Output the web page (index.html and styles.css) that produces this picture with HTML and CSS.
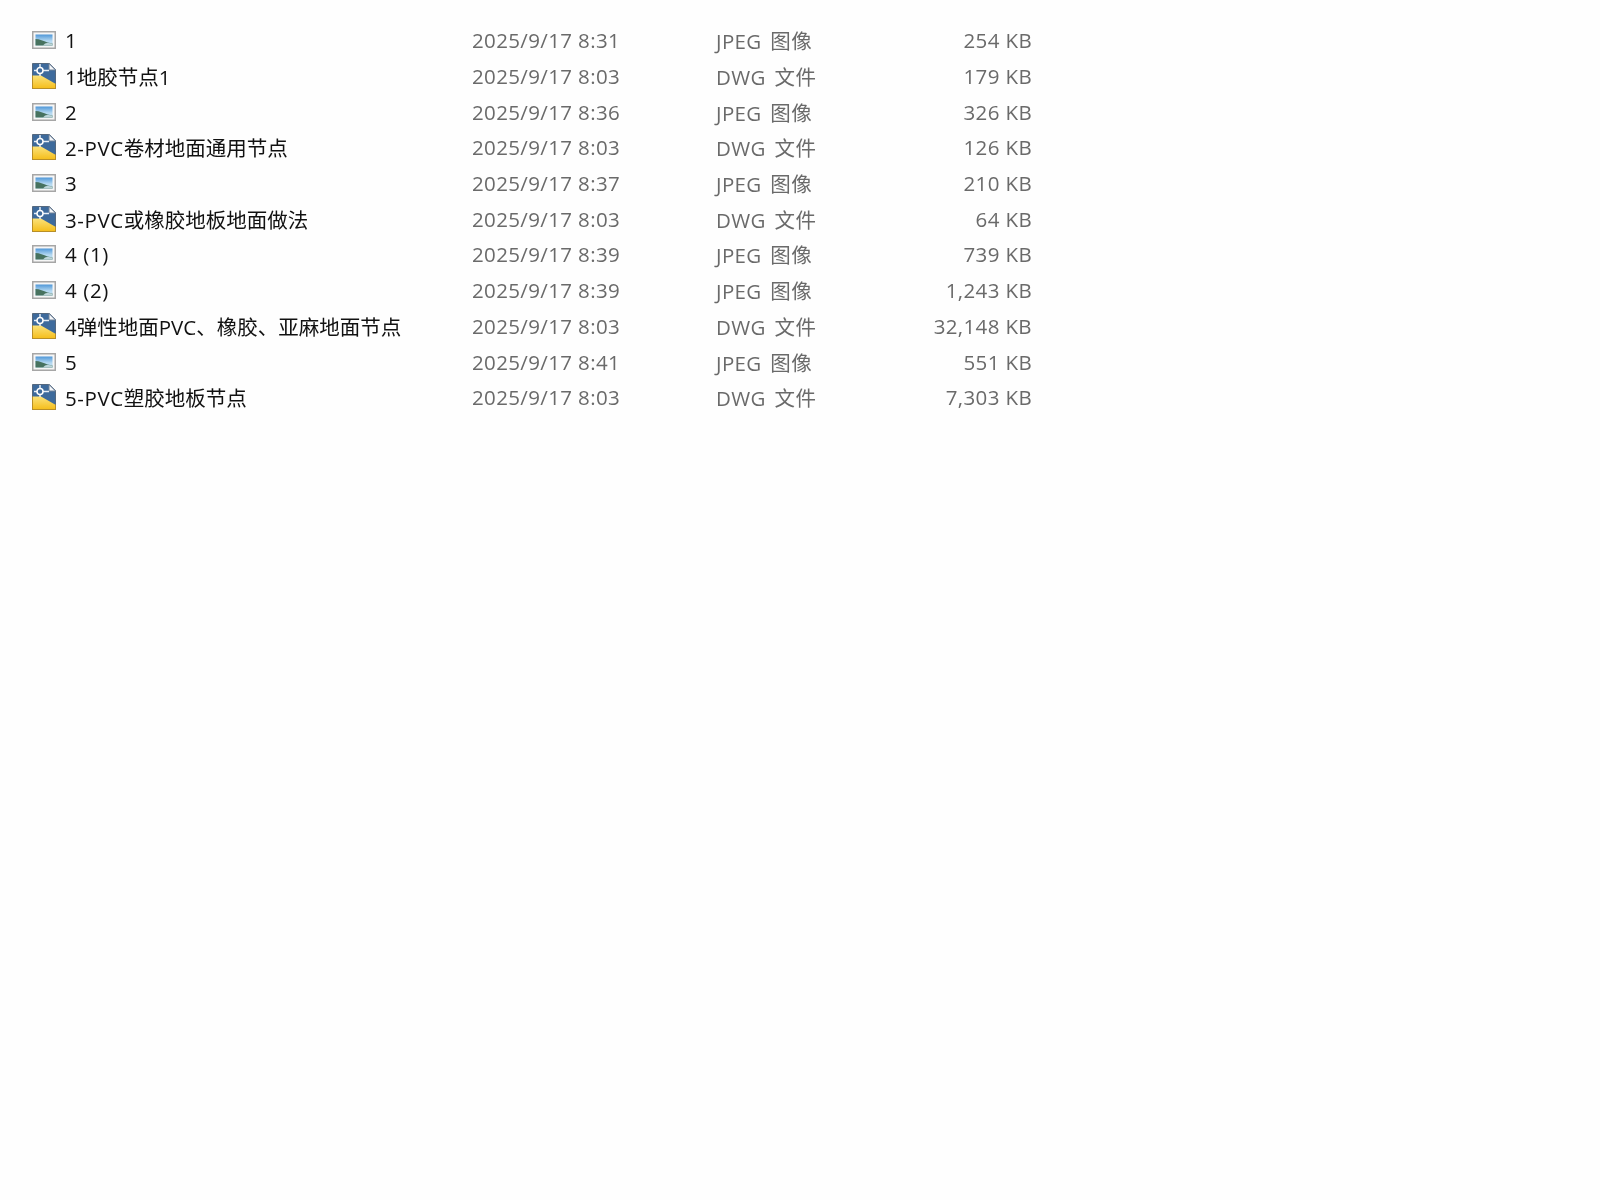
FILE: index.html
```html
<!DOCTYPE html>
<html lang="zh-CN">
<head>
    <meta charset="UTF-8">
    <title>文件列表</title>
    <link rel="stylesheet" href="styles.css">
</head>
<body>
    <svg class="defs" width="0" height="0">
        <defs>
            <linearGradient id="sky" x1="0" y1="0" x2="0" y2="1">
                <stop offset="0" stop-color="#4f97d8"/>
                <stop offset="0.6" stop-color="#b7daf1"/>
            </linearGradient>
            <linearGradient id="sand" x1="0" y1="0" x2="0" y2="1">
                <stop offset="0" stop-color="#fbe27a"/>
                <stop offset="1" stop-color="#f5bf1e"/>
            </linearGradient>
        </defs>
        <symbol id="icon-jpeg" viewBox="0 0 24 26">
            <rect x="0.75" y="4.75" width="22.5" height="16.5" fill="#f6f6f6" stroke="#a6a6a6" stroke-width="1.5"/>
            <rect x="3.500" y="7.500" width="17" height="11" fill="url(#sky)"/>
            <path d="M3.500 12c4 0 8 2 12 3.500l5 1v2h-17z" fill="#47725f"/>
            <path d="M13 16.500c3-.8 5-.5 7.500 0v2h-9.500z" fill="#bcd5d9"/>
        </symbol>
        <symbol id="icon-dwg" viewBox="0 0 24 26">
            <path d="M0.500 0.500h17l6 6v19H0.500z" fill="#3d6a9c" stroke="#55687e"/>
            <path d="M17 0.500l6.500 6.500h-6.500z" fill="#f4f6f9" stroke="#6f8096"/>
            <path d="M1 12.500h8l14 8V25H1z" fill="url(#sand)"/>
            <path d="M0.500 12.500v13h23v-5" fill="none" stroke="#b98f26"/>
            <path d="M8 1v12M2 7.500h15" stroke="#e8eff7" stroke-width="1.500"/>
            <circle cx="8" cy="7.500" r="3" fill="#3d6a9c" stroke="#fff" stroke-width="1.500"/>
        </symbol>
    </svg>

    <div class="file-list">
        <div class="file-row">
            <svg class="file-icon"><use href="#icon-jpeg"/></svg>
            <span class="file-name">1</span>
            <span class="file-date">2025/9/17 8:31</span>
            <span class="file-type">JPEG 图像</span>
            <span class="file-size">254 KB</span>
        </div>
        <div class="file-row">
            <svg class="file-icon"><use href="#icon-dwg"/></svg>
            <span class="file-name">1地胶节点1</span>
            <span class="file-date">2025/9/17 8:03</span>
            <span class="file-type">DWG 文件</span>
            <span class="file-size">179 KB</span>
        </div>
        <div class="file-row">
            <svg class="file-icon"><use href="#icon-jpeg"/></svg>
            <span class="file-name">2</span>
            <span class="file-date">2025/9/17 8:36</span>
            <span class="file-type">JPEG 图像</span>
            <span class="file-size">326 KB</span>
        </div>
        <div class="file-row">
            <svg class="file-icon"><use href="#icon-dwg"/></svg>
            <span class="file-name"><span class="name-latin">2-PVC</span>卷材地面通用节点</span>
            <span class="file-date">2025/9/17 8:03</span>
            <span class="file-type">DWG 文件</span>
            <span class="file-size">126 KB</span>
        </div>
        <div class="file-row">
            <svg class="file-icon"><use href="#icon-jpeg"/></svg>
            <span class="file-name">3</span>
            <span class="file-date">2025/9/17 8:37</span>
            <span class="file-type">JPEG 图像</span>
            <span class="file-size">210 KB</span>
        </div>
        <div class="file-row">
            <svg class="file-icon"><use href="#icon-dwg"/></svg>
            <span class="file-name"><span class="name-latin">3-PVC</span>或橡胶地板地面做法</span>
            <span class="file-date">2025/9/17 8:03</span>
            <span class="file-type">DWG 文件</span>
            <span class="file-size">64 KB</span>
        </div>
        <div class="file-row">
            <svg class="file-icon"><use href="#icon-jpeg"/></svg>
            <span class="file-name"><span class="name-latin">4 (1)</span></span>
            <span class="file-date">2025/9/17 8:39</span>
            <span class="file-type">JPEG 图像</span>
            <span class="file-size">739 KB</span>
        </div>
        <div class="file-row">
            <svg class="file-icon"><use href="#icon-jpeg"/></svg>
            <span class="file-name"><span class="name-latin">4 (2)</span></span>
            <span class="file-date">2025/9/17 8:39</span>
            <span class="file-type">JPEG 图像</span>
            <span class="file-size">1,243 KB</span>
        </div>
        <div class="file-row">
            <svg class="file-icon"><use href="#icon-dwg"/></svg>
            <span class="file-name">4弹性地面PVC、橡胶、亚麻地面节点</span>
            <span class="file-date">2025/9/17 8:03</span>
            <span class="file-type">DWG 文件</span>
            <span class="file-size">32,148 KB</span>
        </div>
        <div class="file-row">
            <svg class="file-icon"><use href="#icon-jpeg"/></svg>
            <span class="file-name">5</span>
            <span class="file-date">2025/9/17 8:41</span>
            <span class="file-type">JPEG 图像</span>
            <span class="file-size">551 KB</span>
        </div>
        <div class="file-row">
            <svg class="file-icon"><use href="#icon-dwg"/></svg>
            <span class="file-name"><span class="name-latin">5-PVC</span>塑胶地板节点</span>
            <span class="file-date">2025/9/17 8:03</span>
            <span class="file-type">DWG 文件</span>
            <span class="file-size">7,303 KB</span>
        </div>
    </div>
</body>
</html>
```

FILE: styles.css
```css
body {
    font-family: "Open Sans", "Noto Sans CJK SC", sans-serif;
    font-size: 20.5px;
    background-color: #fefefe;
    margin: 0;
    padding: 0;
}
.defs {
    display: block;
}
.file-list {
    width: 1000px;
    padding: 22.5px 0 0 32px;
    filter: blur(0.35px);
}
.file-row {
    display: grid;
    grid-template-columns: 33px 407px 244px 1fr 140px;
    align-items: center;
    height: 35.7px;
    color: #6a6a6a;
    letter-spacing: 0.37px;
}
.file-icon {
    width: 24px;
    height: 26px;
}
.file-name {
    color: #111111;
    letter-spacing: 0;
}
.name-latin {
    letter-spacing: 0.6px;
}
.file-type {
    word-spacing: 3px;
}
.file-size {
    text-align: right;
}
```
